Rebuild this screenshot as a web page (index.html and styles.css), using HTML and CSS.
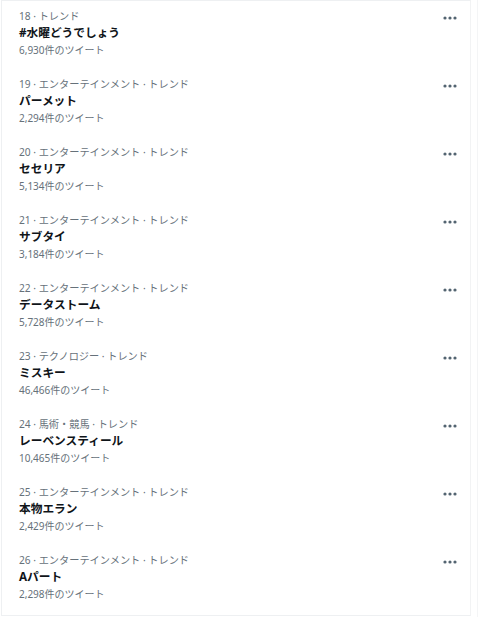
FILE: index.html
```html
<!DOCTYPE html>
<html lang="ja">
<head>
<meta charset="utf-8">
<link rel="stylesheet" href="styles.css">
</head>
<body>
<div class="page">
  <div class="panel">
    <div class="trend">
      <div class="info">
        <div class="meta">18 · トレンド</div>
        <div class="title">#水曜どうでしょう</div>
        <div class="count">6,930件のツイート</div>
      </div>
      <svg class="more" width="14" height="4" viewBox="0 0 14 4"><circle cx="2" cy="2" r="1.6"/><circle cx="7" cy="2" r="1.6"/><circle cx="12" cy="2" r="1.6"/></svg>
    </div>
    <div class="trend">
      <div class="info">
        <div class="meta">19 · エンターテインメント · トレンド</div>
        <div class="title">パーメット</div>
        <div class="count">2,294件のツイート</div>
      </div>
      <svg class="more" width="14" height="4" viewBox="0 0 14 4"><circle cx="2" cy="2" r="1.6"/><circle cx="7" cy="2" r="1.6"/><circle cx="12" cy="2" r="1.6"/></svg>
    </div>
    <div class="trend">
      <div class="info">
        <div class="meta">20 · エンターテインメント · トレンド</div>
        <div class="title">セセリア</div>
        <div class="count">5,134件のツイート</div>
      </div>
      <svg class="more" width="14" height="4" viewBox="0 0 14 4"><circle cx="2" cy="2" r="1.6"/><circle cx="7" cy="2" r="1.6"/><circle cx="12" cy="2" r="1.6"/></svg>
    </div>
    <div class="trend">
      <div class="info">
        <div class="meta">21 · エンターテインメント · トレンド</div>
        <div class="title">サブタイ</div>
        <div class="count">3,184件のツイート</div>
      </div>
      <svg class="more" width="14" height="4" viewBox="0 0 14 4"><circle cx="2" cy="2" r="1.6"/><circle cx="7" cy="2" r="1.6"/><circle cx="12" cy="2" r="1.6"/></svg>
    </div>
    <div class="trend">
      <div class="info">
        <div class="meta">22 · エンターテインメント · トレンド</div>
        <div class="title">データストーム</div>
        <div class="count">5,728件のツイート</div>
      </div>
      <svg class="more" width="14" height="4" viewBox="0 0 14 4"><circle cx="2" cy="2" r="1.6"/><circle cx="7" cy="2" r="1.6"/><circle cx="12" cy="2" r="1.6"/></svg>
    </div>
    <div class="trend">
      <div class="info">
        <div class="meta">23 · テクノロジー · トレンド</div>
        <div class="title">ミスキー</div>
        <div class="count">46,466件のツイート</div>
      </div>
      <svg class="more" width="14" height="4" viewBox="0 0 14 4"><circle cx="2" cy="2" r="1.6"/><circle cx="7" cy="2" r="1.6"/><circle cx="12" cy="2" r="1.6"/></svg>
    </div>
    <div class="trend">
      <div class="info">
        <div class="meta">24 · 馬術・競馬 · トレンド</div>
        <div class="title">レーベンスティール</div>
        <div class="count">10,465件のツイート</div>
      </div>
      <svg class="more" width="14" height="4" viewBox="0 0 14 4"><circle cx="2" cy="2" r="1.6"/><circle cx="7" cy="2" r="1.6"/><circle cx="12" cy="2" r="1.6"/></svg>
    </div>
    <div class="trend">
      <div class="info">
        <div class="meta">25 · エンターテインメント · トレンド</div>
        <div class="title">本物エラン</div>
        <div class="count">2,429件のツイート</div>
      </div>
      <svg class="more" width="14" height="4" viewBox="0 0 14 4"><circle cx="2" cy="2" r="1.6"/><circle cx="7" cy="2" r="1.6"/><circle cx="12" cy="2" r="1.6"/></svg>
    </div>
    <div class="trend">
      <div class="info">
        <div class="meta">26 · エンターテインメント · トレンド</div>
        <div class="title">Aパート</div>
        <div class="count">2,298件のツイート</div>
      </div>
      <svg class="more" width="14" height="4" viewBox="0 0 14 4"><circle cx="2" cy="2" r="1.6"/><circle cx="7" cy="2" r="1.6"/><circle cx="12" cy="2" r="1.6"/></svg>
    </div>
  </div>
  <div class="gutter"></div>
</div>
</body>
</html>
```
FILE: styles.css
```css
html, body {
  margin: 0;
  padding: 0;
  background: #ffffff;
}
body {
  font-family: "Noto Sans", "Noto Sans CJK JP", sans-serif;
  color: #0f1419;
}
.page {
  display: flex;
  width: 480px;
  height: 617px;
  padding-left: 1px;
  box-sizing: border-box;
}
.panel {
  width: 470px;
  height: 616px;
  box-sizing: border-box;
  border: 1px solid #eef0f2;
  border-right-color: #f2f3f4;
}
.gutter {
  width: 6px;
  border-right: 1px solid #f4f5f6;
}
.trend {
  display: flex;
  justify-content: space-between;
  align-items: flex-start;
  height: 68px;
  box-sizing: border-box;
  padding: 8px 13px 0 17px;
}
.info {
  display: flex;
  flex-direction: column;
}
.meta {
  font-size: 10.2px;
  line-height: 15px;
  color: #66717a;
}
.title {
  font-size: 11.7px;
  line-height: 17px;
  font-weight: 700;
  color: #0f1419;
}
.count {
  margin-top: 2px;
  font-size: 10px;
  line-height: 14px;
  color: #66717a;
}
.more {
  margin-top: 7px;
  fill: #536471;
}
```
